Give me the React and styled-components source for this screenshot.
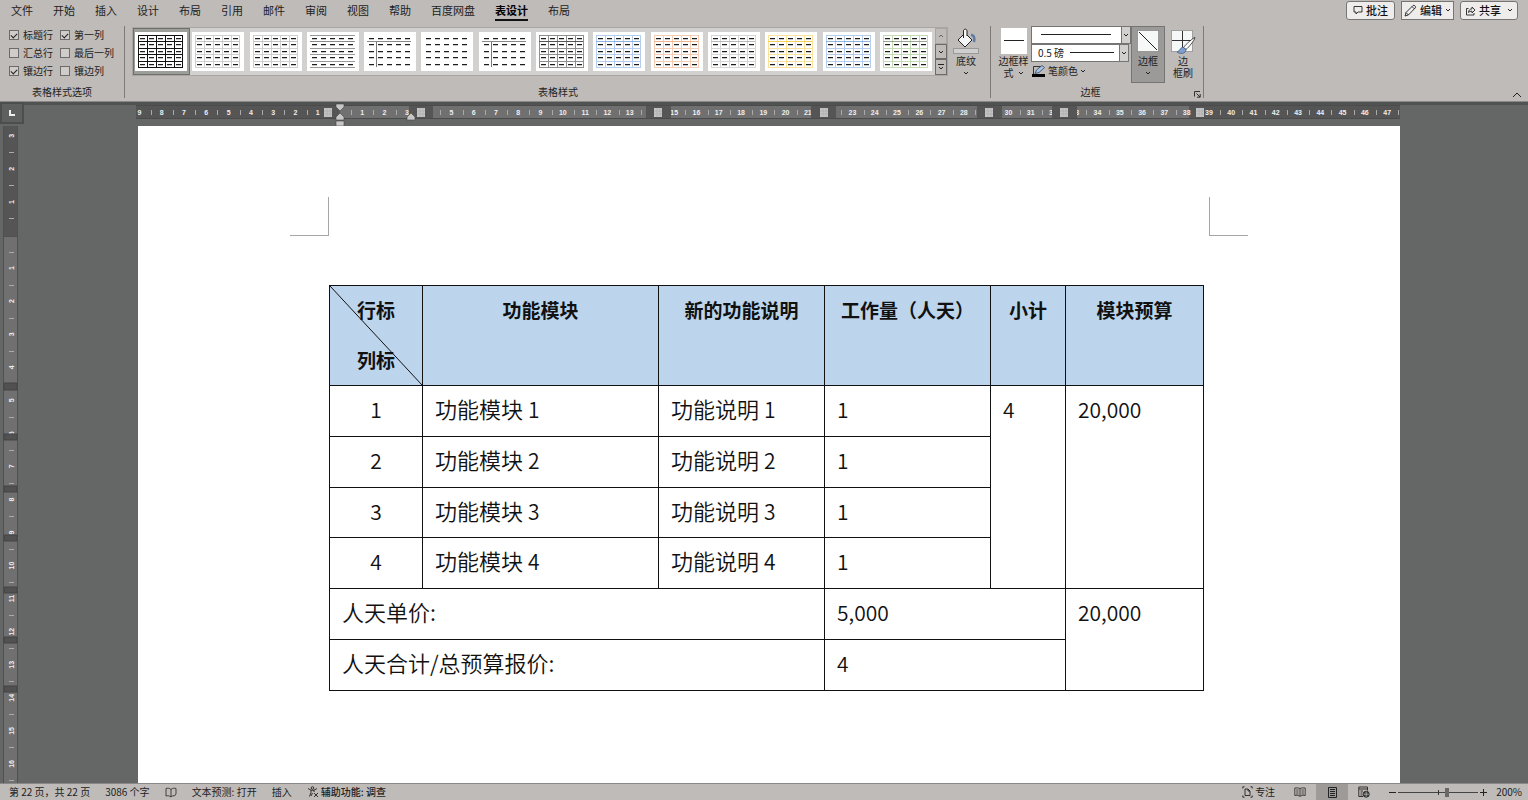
import React from "react";
import styled, { createGlobalStyle, css } from "styled-components";

const GlobalStyle = createGlobalStyle`
  * { box-sizing: border-box; }
  body {
    margin: 0;
    font-family: "Noto Sans CJK SC", "Liberation Sans", sans-serif;
    font-size: 10px;
    line-height: 12px;
    color: #222;
  }
  button, select, input {
    font: inherit;
    color: inherit;
    margin: 0;
    padding: 0;
    border: 0;
    background: none;
  }
`;

const Shell = styled.div`
  display: flex;
  flex-direction: column;
  height: 100vh;
  overflow: hidden;
  background: #656766;
`;

/* ---------- tabs ---------- */

const Header = styled.header`
  flex: none;
  background: #bfbbb8;
  border-bottom: 1px solid #8a8886;
`;

const TabBar = styled.div`
  display: flex;
  justify-content: space-between;
  height: 24px;
  padding: 0 10px 0 11px;
`;

const Tabs = styled.nav`
  display: flex;
  gap: 20px;
`;

const Tab = styled.a`
  font-size: 11px;
  line-height: 15px;
  height: 21px;
  padding-top: 3px;
  color: #222;
  text-decoration: none;
  border-bottom: 2px solid transparent;
  ${(p) =>
    p.$active &&
    css`
      color: #000;
      font-weight: 700;
      border-color: #111;
    `}
`;

const Actions = styled.div`
  display: flex;
  align-items: flex-start;
  gap: 6px;
  padding-top: 1px;
`;

const ActionButton = styled.button`
  display: flex;
  align-items: center;
  gap: 3px;
  height: 19px;
  padding: 0 ${(p) => p.$pad}px 1px;
  font-size: 11px;
  font-weight: 500;
  color: #111;
  background: #eeedec;
  border: 1px solid #777573;
  border-radius: ${(p) => (p.$square ? 0 : 3)}px;
`;

/* ---------- ribbon ---------- */

const Ribbon = styled.div`
  display: flex;
  height: 77px;
  padding-top: 2px;
`;

const Group = styled.section`
  display: flex;
  flex-direction: column;
  height: 72px;
  padding-left: ${(p) => p.$left}px;
  padding-right: ${(p) => p.$right}px;
  border-right: 1px solid #7d7a78;
`;

const GroupBody = styled.div`
  display: flex;
  flex: 1;
  min-height: 0;
`;

const GroupFoot = styled.div`
  position: relative;
  display: flex;
  justify-content: center;
  height: 13px;
  padding-right: ${(p) => p.$shift || 0}px;
  line-height: 14px;
`;

const Launcher = styled.button`
  position: absolute;
  right: 0;
  bottom: 0;
  display: flex;
`;

const OptionGrid = styled.div`
  display: grid;
  grid-template-columns: 51px 1fr;
  grid-auto-rows: 18px;
  align-content: start;
  width: 106px;
`;

const Option = styled.label`
  display: flex;
  align-items: center;
  gap: 4px;
  height: 18px;
  white-space: nowrap;
`;

const CheckBox = styled.input`
  appearance: none;
  flex: none;
  width: 10px;
  height: 10px;
  background: #cfccca;
  border: 1px solid #6d6b69;
  &:checked::after {
    content: "";
    display: block;
    width: 5px;
    height: 3px;
    margin: 2px 0 0 1px;
    border-left: 1px solid #222;
    border-bottom: 1px solid #222;
    transform: rotate(-45deg);
  }
`;

const Gallery = styled.div`
  display: flex;
  width: 816px;
  height: 49px;
  margin-top: 1px;
  background: #d2d1d0;
  border: 1px solid #a8a5a3;
`;

const ThumbRow = styled.div`
  display: flex;
  flex: 1;
  justify-content: space-between;
`;

const Thumb = styled.button`
  display: flex;
  padding: 3px 2px 3px 1px;
  border: 1px solid ${(p) => (p.$selected ? "#6f706c" : "transparent")};
  background: ${(p) => (p.$selected ? "#9c9e99" : "transparent")};
`;

const GalleryNav = styled.div`
  display: flex;
  flex: none;
  flex-direction: column;
  width: 12px;
`;

const NavButton = styled.button`
  display: flex;
  flex: 1;
  align-items: center;
  justify-content: center;
  background: #bfbbb8;
  border: 1px solid ${(p) => (p.$dim ? "#a8a5a3" : "#6d6b69")};
`;

const Tool = styled.button`
  display: flex;
  flex-direction: column;
  align-items: center;
  width: ${(p) => p.$w}px;
  height: 57px;
  padding-top: 1px;
  border: 1px solid ${(p) => (p.$pressed ? "#777573" : "transparent")};
  background: ${(p) => (p.$pressed ? "#9c9a98" : "transparent")};
`;

const ToolText = styled.span`
  display: flex;
  align-items: center;
  gap: 4px;
  height: 12px;
  margin-top: ${(p) => (p.$first ? 1 : 0)}px;
  white-space: nowrap;
`;

const PenColumn = styled.div`
  display: flex;
  flex-direction: column;
  width: 100px;
`;

const SelectBox = styled.div`
  position: relative;
  height: 18px;
  margin-right: ${(p) => p.$inset || 0}px;
  border: 1px solid #777573;
  background: #fff;
`;

const Select = styled.select`
  appearance: none;
  display: block;
  width: 100%;
  height: 16px;
  padding-left: 6px;
  line-height: 16px;
`;

const SelectArrow = styled.span`
  position: absolute;
  top: 0;
  right: 0;
  bottom: 0;
  display: flex;
  align-items: center;
  justify-content: center;
  width: 9px;
  background: #d2d0ce;
  border-left: 1px solid #777573;
  pointer-events: none;
`;

const LineSample = styled.span`
  position: absolute;
  top: 7px;
  left: ${(p) => p.$left}px;
  right: ${(p) => p.$right}px;
  height: 1px;
  background: #222;
  pointer-events: none;
`;

const PenButton = styled.button`
  display: flex;
  align-items: center;
  gap: 2px;
  height: 18px;
  padding-left: 1px;
`;

const CollapseButton = styled.button`
  align-self: flex-end;
  display: flex;
  margin: 0 5px 0 auto;
`;

/* ---------- workspace ---------- */

const RulerRow = styled.div`
  display: flex;
  flex: none;
  height: 24px;
  background: linear-gradient(#515352 0 3px, #656766 3px);
`;

const TabStop = styled.button`
  display: flex;
  align-items: center;
  justify-content: center;
  width: 24px;
  height: 22px;
  margin-right: 112px;
  background: #5e605f;
  border: 2px solid #4c4e4d;
`;

const Workspace = styled.main`
  display: flex;
  flex: 1;
  min-height: 0;
  overflow: hidden;
`;

const SideRuler = styled.div`
  flex: none;
  width: 18px;
  padding-left: 3px;
  margin-right: 120px;
`;

const Paper = styled.article`
  flex: 1;
  margin-right: 128px;
  padding-top: 71px;
  background: #fff;
`;

const MarginMarks = styled.div`
  display: flex;
  justify-content: space-between;
  margin: 0 152px 49px;
`;

const Mark = styled.span`
  width: 39px;
  height: 39px;
  border: 0 solid #a6a6a6;
  border-bottom-width: 1px;
  border-${(p) => p.$side}-width: 1px;
`;

const Sheet = styled.div`
  padding: 0 196px 0 191px;
`;

const DocTable = styled.table`
  width: 100%;
  height: 406px;
  border-collapse: collapse;
  table-layout: fixed;
  color: #111;
`;

const Col = styled.col`
  width: ${(p) => (p.$w ? p.$w + "px" : "auto")};
`;

const HeadCell = styled.th`
  position: relative;
  height: 100px;
  padding: 0;
  vertical-align: top;
  font-size: 19px;
  font-weight: 700;
  line-height: 48px;
  background: #bdd5ec;
  border: 1px solid #111;
`;

const Diagonal = styled.svg`
  position: absolute;
  inset: 0;
  width: 100%;
  height: 100%;
`;

const HeadLine = styled.div`
  height: 50px;
  &:last-of-type {
    height: 48px;
  }
`;

const Cell = styled.td`
  padding: 0 12px;
  vertical-align: top;
  text-align: ${(p) => (p.$center ? "center" : "left")};
  font-size: 22px;
  font-weight: 350;
  line-height: 45px;
  border: 1px solid #111;
`;

const Num = styled.span`
  font-size: 21px;
`;

/* ---------- status bar ---------- */

const Status = styled.footer`
  display: flex;
  flex: none;
  align-items: center;
  height: 17px;
  padding: 0 6px 0 9px;
  background: #bfbbb8;
  border-top: 1px solid #8a8886;
  white-space: nowrap;
`;

const StatusGroup = styled.div`
  display: flex;
  align-items: center;
  gap: ${(p) => p.$gap}px;
  margin-left: ${(p) => (p.$end ? "auto" : 0)};
`;

const StatusItem = styled.button`
  display: flex;
  align-items: center;
  gap: 2px;
  height: 16px;
  font-weight: ${(p) => (p.$strong ? 500 : 400)};
`;

const ViewButton = styled.button`
  display: flex;
  align-items: center;
  justify-content: center;
  width: 32px;
  height: 16px;
  background: ${(p) => (p.$on ? "#9d9a98" : "transparent")};
`;

const ZoomSlider = styled.input`
  appearance: none;
  width: 80px;
  height: 16px;
  background:
    linear-gradient(#333, #333) 40px 50% / 1px 5px no-repeat,
    linear-gradient(#444, #444) 0 50% / 100% 1px no-repeat;
  &::-webkit-slider-thumb {
    appearance: none;
    width: 4px;
    height: 9px;
    background: #6a6866;
  }
`;

/* ---------- drawings ---------- */

const Chevron = ({ size = 6, up, color = "#222" }) => (
  <svg width={size} height={size} viewBox="0 0 6 6" fill="none" stroke={color} strokeWidth={6 / size}>
    <path d={up ? "M1 4L3 2L5 4" : "M1 2L3 4L5 2"} />
  </svg>
);

const THUMBS = [
  { type: "grid", line: "#111", head: "#111" },
  { type: "grid", line: "#cfcfcf", head: "#c4c4c4" },
  { type: "grid", line: "#cfcfcf", head: "#c4c4c4" },
  { type: "rows", line: "#999", head: "#888" },
  { type: "head", line: "#777", head: "#888" },
  { type: "none" },
  { type: "head", line: "#777", head: "#888" },
  { type: "grid", line: "#8f8f8f", head: "#555" },
  { type: "grid", line: "#b4cdec", head: "#8fb4e3" },
  { type: "grid", line: "#f5cdb4", head: "#f2b48c" },
  { type: "grid", line: "#d6d6d6", head: "#b8b8b8" },
  { type: "grid", line: "#fae29a", head: "#f5cf5c" },
  { type: "grid", line: "#b4cdec", head: "#8fb4e3" },
  { type: "grid", line: "#c3dab4", head: "#9aa893" },
];

const XS = [3, 12, 21, 30, 39, 47];
const YS = [3, 9, 16, 22, 29, 35];

function StyleThumb({ type, line, head }) {
  return (
    <svg width="52" height="39" viewBox="0 0 52 39" shapeRendering="crispEdges">
      <rect width="52" height="39" fill="#fff" />
      {(type === "grid" || type === "rows") &&
        YS.map((y) => <rect key={y} x="3" y={y} width="45" height="1" fill={line} />)}
      {type === "grid" && XS.map((x) => <rect key={x} x={x} y="3" width="1" height="32" fill={line} />)}
      {type === "head" && <rect x="12" y="10" width="1" height="25" fill={line} />}
      {type !== "none" && <rect x="3" y="9" width="44" height="1" fill={head} />}
      {[6, 12, 19, 25, 32].map((y) =>
        [5, 14, 23, 32, 41].map((x) => (
          <g key={x + "-" + y}>
            <rect x={x} y={y} width="5" height="1" fill="#1c1c1c" />
            <rect x={x} y={y + 1} width="5" height="1" fill="#c8c8c8" />
          </g>
        ))
      )}
    </svg>
  );
}

const H_UNIT = 22.28;
const H_ZERO = 204;
const H_LIGHT = [[204, 273], [297, 510], [535, 675], [700, 841], [866, 916], [941, 1053]];
const H_MARKS = [192, 285, 522, 688, 853, 928, 1064];

function HorizontalRuler() {
  const marks = [];
  for (let i = -9; i <= 47; i += 1) {
    const x = H_ZERO + i * H_UNIT;
    if (i !== 0)
      marks.push(
        <text key={i} x={x} y="12" textAnchor="middle">
          {Math.abs(i)}
        </text>
      );
    marks.push(<rect key={"t" + i} x={Math.round(x + H_UNIT / 2)} y="7" width="1" height="5" fill="#aaa" />);
  }
  return (
    <svg width="1264" height="24" viewBox="0 0 1264 24" fontFamily="Liberation Sans, sans-serif" fontSize="7" fontWeight="700" fill="#eee">
      <clipPath id="h-scale">
        <rect x="0" y="0" width="188" height="24" />
        {H_LIGHT.map(([a, b]) => (
          <rect key={a} x={a} y="0" width={b - a} height="24" />
        ))}
        <rect x="1053" y="0" width="211" height="24" />
      </clipPath>
      <rect y="3" width="1264" height="14" fill="#4b4b4b" />
      <rect y="4" width="1264" height="12" fill="#555" />
      {H_LIGHT.map(([a, b]) => (
        <rect key={a} x={a} y="4" width={b - a} height="12" fill="#707070" />
      ))}
      <g clipPath="url(#h-scale)" transform="translate(0 1)">{marks}</g>
      {H_MARKS.map((x) => (
        <g key={x}>
          <rect x={x - 4} y="6" width="8" height="9" fill="#c4c4c4" />
          <path d={`M${x - 4} 9H${x + 4}M${x - 4} 12H${x + 4}M${x - 1} 6V15M${x + 2} 6V15`} stroke="#a4a4a4" strokeWidth="0.5" />
        </g>
      ))}
      <g fill="#c6c6c6" stroke="#444" strokeWidth="0.6">
        <path d="M200 2H208V5L204 9L200 5Z" />
        <path d="M204 11L208 15V18H200V15Z" />
        <rect x="200" y="19" width="8" height="5" />
        <path d="M275 11L279 15V18H271V15Z" />
      </g>
    </svg>
  );
}

const V_UNIT = 33.06;
const V_ZERO = 109;
const V_GAPS = [[257, 7], [308, 6], [360, 6], [409, 6], [461, 6], [511, 6], [560, 6]];

function VerticalRuler() {
  const marks = [];
  for (let i = -3; i <= 16; i += 1) {
    const y = V_ZERO + i * V_UNIT;
    if (i !== 0)
      marks.push(
        <text key={i} transform={`translate(11 ${y}) rotate(-90)`} textAnchor="middle">
          {Math.abs(i)}
        </text>
      );
    marks.push(<rect key={"t" + i} x="6" y={Math.round(y + V_UNIT / 2)} width="5" height="1" fill="#aaa" />);
  }
  return (
    <svg width="15" height="657" viewBox="0 0 15 657" fontFamily="Liberation Sans, sans-serif" fontSize="7" fontWeight="700" fill="#eee">
      <rect width="15" height="657" fill="#4f504f" />
      <rect x="1" width="13" height="110" fill="#555" />
      <rect x="1" y="111" width="13" height="546" fill="#707070" />
      {marks}
      {V_GAPS.map(([y, h]) => (
        <rect key={y} x="1" y={y} width="13" height={h} fill="#515151" stroke="#454545" strokeWidth="1" />
      ))}
    </svg>
  );
}

const CommentIcon = () => (
  <svg width="10" height="10" viewBox="0 0 10 10" fill="none" stroke="#222" strokeWidth="0.9">
    <path d="M1 1.5H9V7H5L3 9V7H1Z" />
  </svg>
);

const PencilIcon = () => (
  <svg width="13" height="13" viewBox="0 0 13 13" fill="none" stroke="#222" strokeWidth="0.9">
    <path d="M1 12L2 8.5L9 1.5C10 .5 12.3 2.6 11.4 3.8L4.4 11ZM8 2.5L10.4 4.9M2 8.5L4.4 11" />
  </svg>
);

const ShareIcon = () => (
  <svg width="11" height="11" viewBox="0 0 11 11" fill="none" stroke="#222" strokeWidth="0.9">
    <path d="M3.5 3.5H1.5V10H9V8M3.5 7.5C3.7 5 5 4 7 3.8V2L10 5L7 8V6.2C5.5 6.2 4.5 6.5 3.5 7.5Z" />
  </svg>
);

const BucketIcon = () => (
  <svg width="26" height="26" viewBox="0 0 26 26">
    <path d="M18 7C21 7 22 10 21 14" fill="none" stroke="#5c7ba6" strokeWidth="2.5" />
    <path d="M5 12L12 5L19 12L12 19Z" fill="#f4f6f6" stroke="#222" />
    <path d="M10.5 10V3C10.5 .6 14 .6 14 3V8" fill="#f4f6f6" stroke="#222" />
    <rect x=".5" y="20.5" width="25" height="5" fill="#cfcfd0" stroke="#9a9898" />
  </svg>
);

const BorderStyleIcon = () => (
  <svg width="26" height="26" viewBox="0 0 26 26">
    <rect width="26" height="26" fill="#fff" />
    <rect x="3" y="12" width="20" height="1" fill="#222" />
  </svg>
);

const DiagonalBorderIcon = () => (
  <svg width="22" height="26" viewBox="0 0 22 26">
    <rect x=".5" y="2.5" width="21" height="21" fill="#f6f8f8" stroke="#666" strokeDasharray="1 1" />
    <path d="M2 4L20 22" stroke="#222" />
  </svg>
);

const BorderPainterIcon = () => (
  <svg width="26" height="26" viewBox="0 0 26 26">
    <rect x="1.5" y="2.5" width="21" height="21" fill="#f6f8f8" stroke="#666" strokeDasharray="1 1" />
    <path d="M12.5 3V23M2 12.5H22" stroke="#333" />
    <path d="M25 9.5C23 10 16 16 13.5 19.5L16 21.5C19 19 24 13 25 9.5Z" fill="#fff" stroke="#222" strokeWidth=".8" />
    <path d="M13.5 19.5C10.5 18.5 10 23 7 24C10 26.5 16 26 16 21.5Z" fill="#7d9fd0" stroke="#33486b" strokeWidth=".6" />
  </svg>
);

const PenColorIcon = () => (
  <svg width="14" height="13" viewBox="0 0 14 13">
    <path d="M9 1.5H1.5V9" fill="none" stroke="#333" />
    <path d="M3 8.5L4.5 5L10 .5L12.5 2.5L7 7.5Z" fill="#a9c3e4" stroke="#2e4668" strokeWidth=".8" />
    <rect x="0" y="9" width="13" height="3" fill="#000" />
  </svg>
);

const LauncherIcon = () => (
  <svg width="7" height="7" viewBox="0 0 7 7" fill="none" stroke="#222" strokeWidth=".9">
    <path d="M.5 5.5V.5H6M2.5 2.5L6 6M6.2 3V6.2H3" />
  </svg>
);

const BookIcon = () => (
  <svg width="12" height="11" viewBox="0 0 12 11" fill="none" stroke="#333" strokeWidth=".9">
    <path d="M6 2.5C4.5 1 2.5 1 1 1.5V9C3 8.5 4.5 8.8 6 10C7 9 8 8.5 9 8.5M6 2.5V10M6 2.5C7.5 1 9.5 1 11 1.5V7L9 9.5" />
  </svg>
);

const AccessIcon = () => (
  <svg width="12" height="12" viewBox="0 0 12 12" fill="none" stroke="#222" strokeWidth=".9">
    <circle cx="5.5" cy="2" r="1.3" />
    <path d="M1 2.5L4 4.2V6.5L2.5 10.5M10 2.5L7 4.2V6M4 4.2H7M4 10L5.5 7M7 7L11 11M11 7L7 11" />
  </svg>
);

const FocusIcon = () => (
  <svg width="11" height="12" viewBox="0 0 11 12" fill="none" stroke="#222" strokeWidth=".9">
    <path d="M2.5 .8H.8V2.5M8.5 .8H10.2V2.5M.8 9.5V11.2H2.5M10.2 9.5V11.2H8.5M3 3H6L8 5V9.5H3ZM6 3V5H8" />
  </svg>
);

const ReadIcon = () => (
  <svg width="12" height="10" viewBox="0 0 12 10" fill="none" stroke="#333" strokeWidth=".9">
    <path d="M6 1.5C4.5 .8 2.5 .8 .8 1V8.5C3 8.2 4.5 8.5 6 9.3C7.5 8.5 9 8.2 11.2 8.5V1C9.5 .8 7.5 .8 6 1.5ZM6 1.5V9M2.2 3H4.5M2.2 5H4.5M2.2 7H4.5M7.5 3H9.8M7.5 5H9.8M7.5 7H9.8" />
  </svg>
);

const PrintIcon = () => (
  <svg width="9" height="11" viewBox="0 0 9 11" fill="none" stroke="#222">
    <path d="M.5 .5H8.5V10.5H.5ZM2 2.5H7M2 4.5H7M2 6.5H7M2 8.5H7" />
  </svg>
);

const WebIcon = () => (
  <svg width="12" height="12" viewBox="0 0 12 12" fill="none" stroke="#222" strokeWidth=".9">
    <path d="M5 10.5H.8V1H9.5V4.5M.8 3H9.5M2.5 5H5M2.5 7H4.5M2.5 9H4.5" />
    <circle cx="8.2" cy="8.2" r="3" fill="#444" />
    <path d="M5.5 8.2H11M8.2 5.5V11" stroke="#ccc" strokeWidth=".6" />
  </svg>
);

/* ---------- data ---------- */

const TABS = ["文件", "开始", "插入", "设计", "布局", "引用", "邮件", "审阅", "视图", "帮助", "百度网盘", "表设计", "布局"];

const OPTIONS = [
  ["标题行", true],
  ["第一列", true],
  ["汇总行", false],
  ["最后一列", false],
  ["镶边行", true],
  ["镶边列", false],
];

const HEADINGS = ["功能模块", "新的功能说明", "工作量（人天）", "小计", "模块预算"];

export default function App() {
  return (
    <Shell>
      <GlobalStyle />
      <Header>
        <TabBar>
          <Tabs>
            {TABS.map((name, i) => (
              <Tab key={i} href="#" $active={name === "表设计"}>
                {name}
              </Tab>
            ))}
          </Tabs>
          <Actions>
            <ActionButton $pad={6}>
              <CommentIcon />
              批注
            </ActionButton>
            <ActionButton $pad={2} $square>
              <PencilIcon />
              编辑
              <Chevron />
            </ActionButton>
            <ActionButton $pad={4}>
              <ShareIcon />
              共享
              <span />
              <Chevron />
            </ActionButton>
          </Actions>
        </TabBar>
        <Ribbon>
          <Group $left={9} $right={9}>
            <GroupBody>
              <OptionGrid>
                {OPTIONS.map(([name, on]) => (
                  <Option key={name}>
                    <CheckBox type="checkbox" defaultChecked={on} />
                    {name}
                  </Option>
                ))}
              </OptionGrid>
            </GroupBody>
            <GroupFoot>表格样式选项</GroupFoot>
          </Group>
          <Group $left={7} $right={6}>
            <GroupBody>
              <Gallery>
                <ThumbRow>
                  {THUMBS.map((t, i) => (
                    <Thumb key={i} $selected={i === 0} aria-label={`表格样式 ${i + 1}`}>
                      <StyleThumb {...t} />
                    </Thumb>
                  ))}
                </ThumbRow>
                <GalleryNav>
                  <NavButton $dim aria-label="上一行">
                    <Chevron up color="#666" />
                  </NavButton>
                  <NavButton aria-label="下一行">
                    <Chevron />
                  </NavButton>
                  <NavButton aria-label="其他">
                    <svg width="8" height="8" viewBox="0 0 8 8" fill="none" stroke="#222">
                      <path d="M1 1.5H7M2 4L4 6L6 4" />
                    </svg>
                  </NavButton>
                </GalleryNav>
              </Gallery>
              <Tool $w={36}>
                <BucketIcon />
                <ToolText $first>底纹</ToolText>
                <ToolText>
                  <Chevron />
                </ToolText>
              </Tool>
            </GroupBody>
            <GroupFoot>表格样式</GroupFoot>
          </Group>
          <Group $left={5} $right={2}>
            <GroupBody>
              <Tool $w={35}>
                <BorderStyleIcon />
                <ToolText $first>边框样</ToolText>
                <ToolText>
                  式
                  <Chevron />
                </ToolText>
              </Tool>
              <PenColumn>
                <SelectBox>
                  <Select aria-label="笔样式">
                    <option aria-label="实线"></option>
                  </Select>
                  <LineSample $left={9} $right={19} />
                  <SelectArrow>
                    <Chevron />
                  </SelectArrow>
                </SelectBox>
                <SelectBox $inset={2}>
                  <Select aria-label="笔画粗细">
                    <option>0.5 磅</option>
                  </Select>
                  <LineSample $left={38} $right={14} />
                  <SelectArrow>
                    <Chevron />
                  </SelectArrow>
                </SelectBox>
                <PenButton>
                  <PenColorIcon />
                  笔颜色
                  <Chevron />
                </PenButton>
              </PenColumn>
              <Tool $w={34} $pressed>
                <DiagonalBorderIcon />
                <ToolText $first>边框</ToolText>
                <ToolText>
                  <Chevron />
                </ToolText>
              </Tool>
              <Tool $w={36}>
                <BorderPainterIcon />
                <ToolText $first>边</ToolText>
                <ToolText>框刷</ToolText>
              </Tool>
            </GroupBody>
            <GroupFoot $shift={16}>
              边框
              <Launcher aria-label="边框和底纹">
                <LauncherIcon />
              </Launcher>
            </GroupFoot>
          </Group>
          <CollapseButton aria-label="折叠功能区">
            <Chevron up size={12} />
          </CollapseButton>
        </Ribbon>
      </Header>

      <RulerRow>
        <TabStop aria-label="制表符">
          <svg width="6" height="6" viewBox="0 0 6 6">
            <path d="M1 0V5H6" fill="none" stroke="#eee" strokeWidth="2" />
          </svg>
        </TabStop>
        <HorizontalRuler />
      </RulerRow>

      <Workspace>
        <SideRuler>
          <VerticalRuler />
        </SideRuler>
        <Paper>
          <MarginMarks>
            <Mark $side="right" />
            <Mark $side="left" />
          </MarginMarks>
          <Sheet>
            <DocTable>
              <colgroup>
                <Col $w={93} />
                <Col />
                <Col $w={166} />
                <Col $w={166} />
                <Col $w={75} />
                <Col $w={138} />
              </colgroup>
              <thead>
                <tr>
                  <HeadCell>
                    <HeadLine>行标</HeadLine>
                    <HeadLine>列标</HeadLine>
                    <Diagonal viewBox="0 0 100 100" preserveAspectRatio="none">
                      <path d="M0 0L100 100" stroke="#111" vectorEffect="non-scaling-stroke" />
                    </Diagonal>
                  </HeadCell>
                  {HEADINGS.map((h) => (
                    <HeadCell key={h}>{h}</HeadCell>
                  ))}
                </tr>
              </thead>
              <tbody>
                {[1, 2, 3, 4].map((n) => (
                  <tr key={n}>
                    <Cell $center>
                      <Num>{n}</Num>
                    </Cell>
                    <Cell>
                      功能模块 <Num>{n}</Num>
                    </Cell>
                    <Cell>
                      功能说明 <Num>{n}</Num>
                    </Cell>
                    <Cell>
                      <Num>1</Num>
                    </Cell>
                    {n === 1 && (
                      <>
                        <Cell rowSpan={4}>
                          <Num>4</Num>
                        </Cell>
                        <Cell rowSpan={4}>
                          <Num>20,000</Num>
                        </Cell>
                      </>
                    )}
                  </tr>
                ))}
                <tr>
                  <Cell colSpan={3}>人天单价:</Cell>
                  <Cell colSpan={2}>
                    <Num>5,000</Num>
                  </Cell>
                  <Cell rowSpan={2}>
                    <Num>20,000</Num>
                  </Cell>
                </tr>
                <tr>
                  <Cell colSpan={3}>人天合计/总预算报价:</Cell>
                  <Cell colSpan={2}>
                    <Num>4</Num>
                  </Cell>
                </tr>
              </tbody>
            </DocTable>
          </Sheet>
        </Paper>
      </Workspace>

      <Status>
        <StatusGroup $gap={15}>
          <StatusItem>第 22 页，共 22 页</StatusItem>
          <StatusItem>3086 个字</StatusItem>
          <StatusItem aria-label="校对">
            <BookIcon />
          </StatusItem>
          <StatusItem>文本预测: 打开</StatusItem>
          <StatusItem>插入</StatusItem>
          <StatusItem $strong>
            <AccessIcon />
            辅助功能: 调查
          </StatusItem>
        </StatusGroup>
        <StatusGroup $gap={9} $end>
          <StatusItem>
            <FocusIcon />
            专注
          </StatusItem>
          <StatusGroup $gap={0}>
            <ViewButton aria-label="阅读视图">
              <ReadIcon />
            </ViewButton>
            <ViewButton $on aria-label="页面视图">
              <PrintIcon />
            </ViewButton>
            <ViewButton aria-label="Web 版式视图">
              <WebIcon />
            </ViewButton>
          </StatusGroup>
          <StatusGroup $gap={2}>
            <StatusItem aria-label="缩小">
              <svg width="7" height="7" viewBox="0 0 7 7">
                <path d="M0 3.5H7" stroke="#222" />
              </svg>
            </StatusItem>
            <ZoomSlider type="range" min="0" max="100" defaultValue="62" aria-label="缩放" />
            <StatusItem aria-label="放大">
              <svg width="7" height="7" viewBox="0 0 7 7">
                <path d="M0 3.5H7M3.5 0V7" stroke="#222" />
              </svg>
            </StatusItem>
          </StatusGroup>
          <StatusItem>200%</StatusItem>
        </StatusGroup>
      </Status>
    </Shell>
  );
}
